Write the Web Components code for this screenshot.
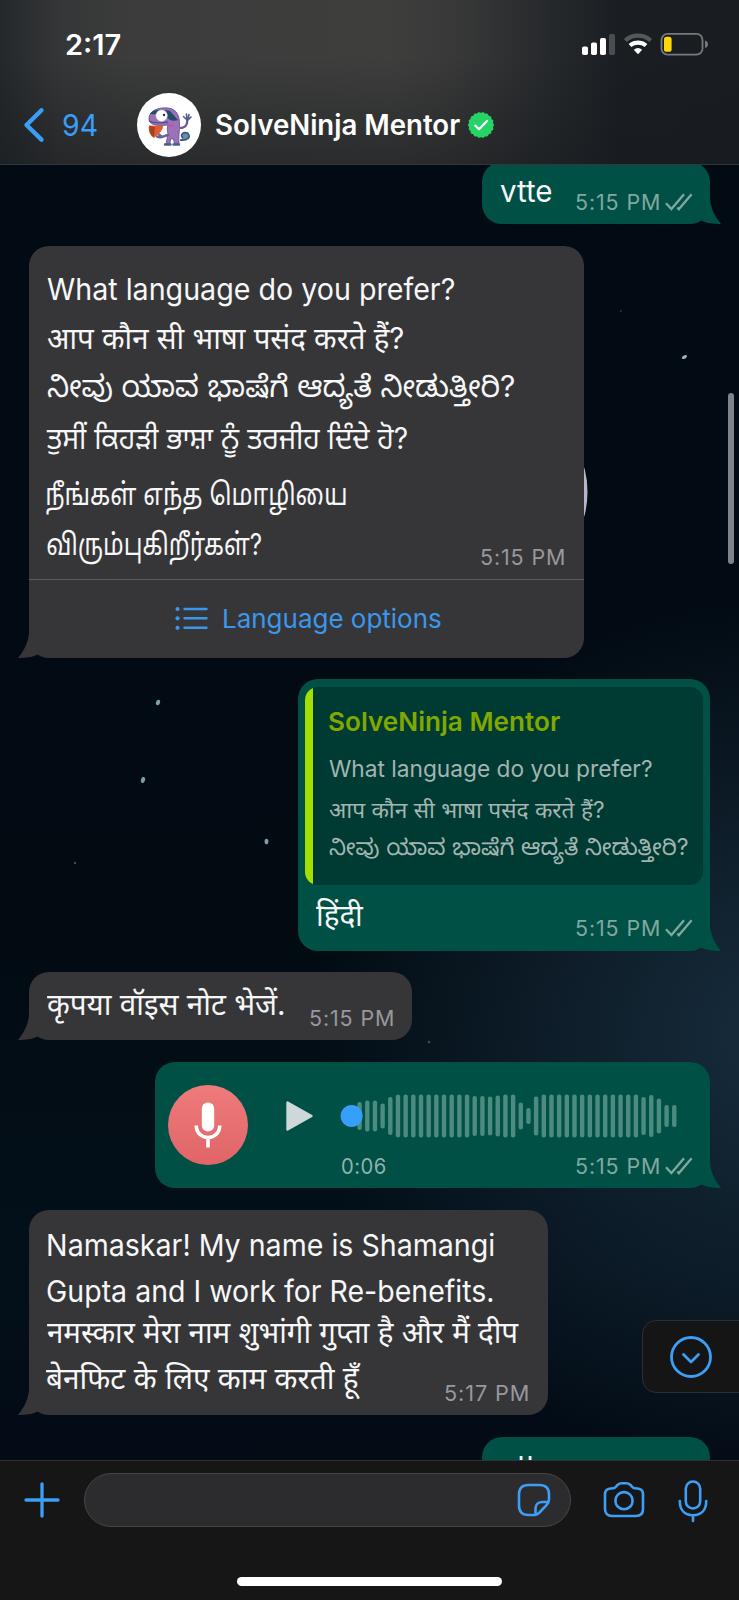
<!DOCTYPE html>
<html lang="en">
<head>
<meta charset="utf-8">
<title>SolveNinja Mentor</title>
<style>
html,body{margin:0;padding:0;background:#020a12}
body{width:739px;height:1600px;overflow:hidden;font-family:Inter,"Noto Sans",sans-serif}
</style>
</head>
<body>
<chat-screen></chat-screen>
<script>
const FONT = 'Inter,"Noto Sans","Noto Sans Devanagari","Noto Sans Kannada","Noto Sans Gurmukhi","Noto Sans Tamil",sans-serif';
const ctx = document.createElement('canvas').getContext('2d');
function define(name, html, setup) {
  const tpl = document.createElement('template');
  tpl.innerHTML = html;
  customElements.define(name, class extends HTMLElement {
    constructor() {
      super();
      this.attachShadow({mode: 'open'}).append(tpl.content.cloneNode(true));
    }
    connectedCallback() { if (setup) setup.call(this, this.shadowRoot); }
  });
}

// A single line of text whose visible glyphs span exactly `w` pixels.
define('fit-text', `<style>
:host{display:block;flex:none;white-space:pre;color:#f7f7f8;height:40px;line-height:40px}
span{display:inline-block;transform-origin:0 0;line-height:inherit}
</style><span><slot></slot></span>`, function (root) {
  const size = +(this.getAttribute('size') || 30), w = +this.getAttribute('w');
  const weight = this.getAttribute('weight') || 400, ls = this.getAttribute('ls') || 0;
  const lh = this.getAttribute('lh') || 40;
  const span = root.querySelector('span');
  Object.assign(this.style, {width: w + 'px', height: lh + 'px', lineHeight: lh + 'px'});
  Object.assign(span.style, {fontFamily: FONT, fontSize: size + 'px', fontWeight: weight, letterSpacing: ls + 'px'});
  ctx.font = weight + ' ' + size + 'px ' + FONT;
  ctx.letterSpacing = ls + 'px';
  const m = ctx.measureText(this.textContent);
  const k = w / (m.actualBoundingBoxRight + m.actualBoundingBoxLeft);
  span.style.transform = `translateX(${m.actualBoundingBoxLeft * k}px) scaleX(${k})`;
});

define('time-stamp', `<style>
:host{display:flex;flex:none;color:#98989d}
fit-text{color:inherit}
svg{display:none;margin:4px 0 0 6px}
:host([read]){color:#80a8a0}
:host([read]) svg{display:block}
</style><fit-text w="83" size="21.5" lh="26" ls="0.9"></fit-text>
<svg width="28" height="18" viewBox="0 0 28 18" fill="none" stroke="currentColor" stroke-width="2.3"><path d="M1 10.2 6.4 16 19 1.2M12.4 14.6 13.8 16.2 26.6 1.2"/></svg>`,
function (root) {
  const t = root.querySelector('fit-text'), n = document.createElement('fit-text');
  for (const a of t.attributes) n.setAttribute(a.name, a.value);
  n.textContent = this.getAttribute('t');
  t.replaceWith(n);
});

define('chat-bubble', `<style>
:host{display:block;position:relative;box-sizing:border-box;border-radius:20px;background:#363638;flex:none;margin-left:29px;align-self:flex-start}
:host([out]){background:#005045;align-self:flex-end;margin:0 29px 0 0}
svg{position:absolute;bottom:0;left:-11px;fill:#363638}
:host([out]) svg{left:auto;right:-11px;transform:scaleX(-1);fill:#005045}
</style><slot></slot>
<svg width="22" height="26" viewBox="0 0 22 26"><path d="M11 0C10.800 9 6.500 18 0 26 8 26 15 25.200 20 22.300L22 4V0Z"/></svg>`);

define('text-row', `<style>
:host{display:flex;justify-content:space-between;align-items:flex-start}
</style><slot></slot>`);

define('list-button', `<style>
:host{display:flex;height:77px;border-top:1px solid #5c5c5f;align-items:flex-start;box-sizing:border-box}
svg{margin:26px 16px 0 146px;flex:none}
fit-text{margin-top:19px;color:#3b97ec}
</style><svg width="33" height="24" viewBox="0 0 33 24" stroke="#3b97ec" stroke-width="2.4" stroke-linecap="round" fill="#3b97ec"><path d="M9.5 3H31.5M9.5 12.3H31.5M9.5 21.8H31.5"/><g stroke="none"><circle cx="2.5" cy="3" r="2.1"/><circle cx="2.5" cy="12.3" r="2.1"/><circle cx="2.5" cy="21.8" r="2.1"/></g></svg>
<fit-text w="217" size="26">Language options</fit-text>`);

define('quote-card', `<style>
:host{display:block;box-sizing:border-box;width:398px;height:198px;margin:0 7px;background:#003b33;border-radius:13px;overflow:hidden}
div{height:198px;box-sizing:border-box;border-left:8px solid #a3e000;padding:15px 0 0 16px}
fit-text{color:#a4b4b1}
fit-text:first-child{color:#82a800}
</style><div><fit-text w="231" size="26" weight="600">SolveNinja Mentor</fit-text>
<fit-text w="323" size="22.5" lh="30" style="margin-top:12px">What language do you prefer?</fit-text>
<fit-text w="275" size="22.5" lh="30" style="margin-top:11px">आप कौन सी भाषा पसंद करते हैं?</fit-text>
<fit-text w="359" size="22.5" lh="30" style="margin-top:7px">ನೀವು ಯಾವ ಭಾಷೆಗೆ ಆದ್ಯತೆ ನೀಡುತ್ತೀರಿ?</fit-text></div>`);

define('voice-note', `<style>
:host{display:flex;align-items:flex-start}
.disc{width:80px;height:80px;flex:none;border-radius:50%;background:linear-gradient(#ef7b7b,#e06568);margin:23px 0 0 13px;display:flex;align-items:center;justify-content:center}
.play{margin:38px 0 0 37px;flex:none}
.main{margin:0 0 0 25px;width:354px;flex:none}
.wave{display:block;margin-top:28px}
text-row{margin-top:11px}
</style>
<div class="disc"><svg width="28" height="46" viewBox="0 0 28 46" fill="none" stroke="#fff" stroke-width="3.6"><rect x="7.8" y="0.5" width="12.4" height="29" rx="6.2" fill="#fff" stroke="none"/><path d="M2.3 23.5C2.3 31 7.6 35.5 14 35.5S25.7 31 25.7 23.5" stroke-linecap="butt"/><path d="M14 35.5V45.5"/></svg></div>
<svg class="play" width="29" height="32" viewBox="0 0 29 32"><path d="M2.5 2.5V29.5L26.5 16Z" fill="#ced8da" stroke="#ced8da" stroke-width="2.4" stroke-linejoin="round"/></svg>
<div class="main"><svg class="wave" width="345" height="52" viewBox="339 1090 345 52"></svg>
<text-row><fit-text w="44" size="21.5" lh="26" ls="0.5" style="color:#8db3ac;margin-left:3px">0:06</fit-text><time-stamp t="5:15 PM" read></time-stamp></text-row></div>`,
function (root) {
  const h = [28,31,31,25,38,43,43,43,43,43,43,43,43,43,43,40,40,39,41,43,43,27,16,39,43,43,43,43,43,43,43,43,43,43,43,43,43,38,42,35,22,22];
  root.querySelector('.wave').innerHTML = h.map((v, i) =>
    `<rect x="${(357.4 + i * 7.675).toFixed(2)}" y="${1116 - v / 2}" width="4.4" height="${v}" rx="2.1" fill="#4d8a80"/>`).join('') +
    '<circle cx="351.6" cy="1116" r="11" fill="#359ffb"/>';
});

define('scroll-down', `<style>
:host{position:absolute;right:-2px;top:1155px;width:99px;height:73px;box-sizing:border-box;background:#151516;border:1px solid #2c2f32;border-radius:14px 0 0 14px;display:flex;align-items:center;padding-left:26px}
</style><svg width="44" height="44" viewBox="0 0 44 44" fill="none" stroke="#3c9ef5" stroke-width="2.8" stroke-linecap="round" stroke-linejoin="round"><circle cx="22" cy="22" r="19.5"/><path d="M14.5 19.5 22 27 29.5 19.5"/></svg>`);

define('status-bar', `<style>
:host{display:flex;align-items:flex-start;height:80px}
fit-text{margin:25px 0 0 66px;color:#fff}
svg{margin:32px 0 0 461px}
</style><fit-text w="54" size="28" weight="600">2:17</fit-text>
<svg width="128" height="26" viewBox="0 0 128 26"><g fill="#fff"><rect x="1" y="14.5" width="6" height="8.500" rx="1.7"/><rect x="10" y="10.5" width="6" height="12.5" rx="1.7"/><rect x="19" y="6" width="6" height="17" rx="1.7"/></g><rect x="28" y="2" width="6" height="21" rx="1.7" fill="#4b4d50"/>
<g fill="none" stroke-width="4.2"><path d="M44.3 8.5A19 19 0 0 1 69.7 8.5" stroke="#55585b"/><path d="M49 13.5A12.5 12.5 0 0 1 65 13.5" stroke="#fff"/></g><path d="M57 22.3 52.8 17.8A6.6 6.6 0 0 1 61.2 17.8Z" fill="#fff"/>
<rect x="80.5" y="1.9" width="41" height="20.7" rx="6" fill="none" stroke="#77797b" stroke-width="1.8"/><rect x="83" y="4.8" width="7.6" height="15" rx="2.6" fill="#ffd60a"/><path d="M124 8.5C128 9.5 128 15 124 16Z" fill="#77797b"/></svg>`);

define('verified-badge', `<style>:host{display:block;width:28px;height:28px}svg{display:block}</style>
<svg width="28" height="28" viewBox="0 0 28 28"><path class="b" fill="#25d366"/><path d="M8.2 14.5 12 18.3 20 10" fill="none" stroke="#fff" stroke-width="2.2" stroke-linecap="round" stroke-linejoin="round"/></svg>`,
function (root) {
  let d = '';
  for (let i = 0; i <= 180; i++) {
    const a = i * Math.PI / 90, r = 12.6 + .45 * Math.cos(18 * a);
    d += (i ? 'L' : 'M') + (14 + r * Math.cos(a)).toFixed(2) + ' ' + (14 + r * Math.sin(a)).toFixed(2);
  }
  root.querySelector('.b').setAttribute('d', d + 'Z');
});

define('mentor-avatar', `<style>:host{display:block;width:64px;height:64px}svg{display:block}</style>
<svg width="64" height="64" viewBox="0 0 64 64"><circle cx="32" cy="32" r="32" fill="#fff"/>
<path d="M43 47C51 48 54 44 51 40.500C47 38 42 42 46 45" fill="#6d8ba8" stroke="#35577b" stroke-width="1.600"/>
<path d="M43 35C49 35 51 31 50 26" fill="none" stroke="#6b5a96" stroke-width="2.200"/>
<path d="M50 27 46.500 23.500M50 27 49.500 21M51 26.500 52 21.500M51 27 54 24" stroke="#52608d" stroke-width="1.600" stroke-linecap="round"/>
<path d="M12 27C11 18 21 14 31 15C40 16 43 23 42.500 33C42.500 39 41.500 43 42 51L37.500 51 36.500 46 33.500 46 33 51 29 51 31 41C30 37 30 35 31 32C23 33 13 33 12 27Z" fill="#9b72b8" stroke="#5c4b86" stroke-width=".8"/>
<path d="M13 21C17 15 27 17 33 18L41 27C36 29 31 27 28 22Z" fill="#244b68"/>
<path d="M12 28C18 31 25 30 31 29" fill="none" stroke="#51538b" stroke-width="1.300"/>
<path d="M30 30C34 34 37 31 38.500 29.500L35 34 31 33Z" fill="#c84ba5"/>
<circle cx="24.600" cy="22.600" r="5.800" fill="#fff" stroke="#aab3c3" stroke-width=".6"/><circle cx="27" cy="22" r="1.200" fill="#202b46"/>
<path d="M12 32.500 26 33C26 38 21 41 17 45C13 43 11 38 12 32.500Z" fill="#e45c2b"/><path d="M12.500 33 18 34 17 44C13 42 12 37 12.500 33Z" fill="#9f4526"/>
<path d="M20 43.500C24 46 26 43 31 42M22 41.500 25 44" stroke="#68639a" stroke-width="2.400" fill="none" stroke-linecap="round"/>
<path d="M28 51.500H33.500M36.500 51.500H42" stroke="#436484" stroke-width="2.400" stroke-linecap="round"/></svg>`);

define('chat-header', `<style>
:host{display:block;height:165px;box-sizing:border-box;border-bottom:1px solid #34373a;position:relative;z-index:1;
background:linear-gradient(rgba(20,22,26,0) 35%,rgba(22,25,29,.5)),linear-gradient(90deg,#24282b 0,#353637 60px,#3b3c3b 130px,#3e3e3d 390px,#393939 450px,#26292c 550px,#1a1e22 620px,#191d22)}
.bar{display:flex;align-items:center;height:90px}
.back{margin:0 17px 0 22px}
</style><status-bar></status-bar>
<div class="bar"><svg class="back" width="24" height="36" viewBox="0 0 24 36" fill="none" stroke="#3a9ef8" stroke-width="4.400" stroke-linecap="round" stroke-linejoin="round"><path d="M19.500 3.300 4.500 18 19.500 32.600"/></svg>
<fit-text w="34" size="29.500" style="color:#3a9ef8">94</fit-text>
<mentor-avatar style="margin-left:40px"></mentor-avatar>
<fit-text w="244" size="28" weight="600" style="margin-left:15px;color:#fff">SolveNinja Mentor</fit-text>
<verified-badge style="margin-left:7px"></verified-badge></div>`);

define('night-sky', `<style>
:host{position:absolute;inset:0;background:radial-gradient(ellipse 480px 440px at 790px 870px,#182d3e 0,rgba(19,37,51,.8) 40%,rgba(10,24,36,0) 100%),linear-gradient(180deg,#020a14,#020b12 60%,#03101a 85%,#030b15)}
svg{display:block}
</style><svg width="739" height="1295" viewBox="0 165 739 1295"><g fill="#9fb3ba"><ellipse cx="684.500" cy="357" rx="2.800" ry="1.600" transform="rotate(-30 684.500 357)"/><g fill="#7f9fa6"><ellipse cx="158" cy="702.500" rx="2" ry="2.800" transform="rotate(20 158 702.500)"/><ellipse cx="143" cy="780" rx="2" ry="3" transform="rotate(15 143 780)"/><ellipse cx="266.500" cy="841.500" rx="1.900" ry="2.800"/></g><circle cx="75" cy="863" r="1.200" opacity=".4"/><circle cx="429" cy="1042" r="1.200" opacity=".4"/><circle cx="621" cy="311" r="1.200" opacity=".2"/></g><ellipse cx="553" cy="492" rx="34.500" ry="58" fill="#b8b5cc"/></svg>`);

define('message-list', `<style>
:host{display:flex;flex-direction:column;position:relative;height:1295px;overflow:hidden}
chat-bubble{z-index:1}
i{position:absolute;z-index:2;left:728px;top:228px;width:6px;height:171px;border-radius:3px;background:#7d8388}
</style><night-sky></night-sky>
<chat-bubble out style="width:228px;height:62px;margin-top:-3px"><text-row style="padding:9px 17px 0 18px"><fit-text w="52">vtte</fit-text><time-stamp t="5:15 PM" read style="margin-top:18px"></time-stamp></text-row></chat-bubble>
<chat-bubble style="width:555px;height:412px;margin-top:22px;padding-top:23px">
<fit-text w="407" style="margin-left:18px">What language do you prefer?</fit-text>
<fit-text w="356" style="margin:9px 0 0 18px">आप कौन सी भाषा पसंद करते हैं?</fit-text>
<fit-text w="467" style="margin:8px 0 0 18px">ನೀವು ಯಾವ ಭಾಷೆಗೆ ಆದ್ಯತೆ ನೀಡುತ್ತೀರಿ?</fit-text>
<fit-text w="361" style="margin:12px 0 0 17px">ਤੁਸੀਂ ਕਿਹੜੀ ਭਾਸ਼ਾ ਨੂੰ ਤਰਜੀਹ ਦਿੰਦੇ ਹੋ?</fit-text>
<fit-text w="300" style="margin:16px 0 0 17px">நீங்கள் எந்த மொழியை</fit-text>
<text-row style="margin:10px 20px 9px 18px"><fit-text w="214">விரும்புகிறீர்கள்?</fit-text><time-stamp t="5:15 PM" style="margin-top:20px"></time-stamp></text-row>
<list-button></list-button></chat-bubble>
<chat-bubble out style="width:412px;height:272px;margin-top:21px;padding-top:8px"><quote-card></quote-card>
<text-row style="margin:10px 17px 0 18px"><fit-text w="48">हिंदी</fit-text><time-stamp t="5:15 PM" read style="margin-top:20px"></time-stamp></text-row></chat-bubble>
<chat-bubble style="width:383px;height:68px;margin-top:21px"><text-row style="padding:12px 19px 0 18px"><fit-text w="237">कृपया वॉइस नोट भेजें.</fit-text><time-stamp t="5:15 PM" style="margin-top:21px"></time-stamp></text-row></chat-bubble>
<chat-bubble out style="width:555px;height:126px;margin-top:22px"><voice-note></voice-note></chat-bubble>
<chat-bubble style="width:519px;height:205px;margin-top:22px;padding-top:15px">
<fit-text w="446" style="margin-left:19px">Namaskar! My name is Shamangi</fit-text>
<fit-text w="446" style="margin:6px 0 0 18px">Gupta and I work for Re-benefits.</fit-text>
<fit-text w="472" style="margin:1px 0 0 18px">नमस्कार मेरा नाम शुभांगी गुप्ता है और मैं दीप</fit-text>
<text-row style="margin:6px 20px 0 17px"><fit-text w="315">बेनफिट के लिए काम करती हूँ</fit-text><time-stamp t="5:17 PM" style="margin-top:22px"></time-stamp></text-row></chat-bubble>
<chat-bubble out style="width:228px;height:62px;margin-top:22px"><text-row style="padding:9px 17px 0 18px"><fit-text w="52">vtte</fit-text></text-row></chat-bubble>
<i></i><scroll-down style="z-index:2"></scroll-down>`);

define('compose-bar', `<style>
:host{display:flex;flex-direction:column;align-items:center;height:140px;box-sizing:border-box;background:#161616;border-top:1px solid #2e3032;position:relative}
.row{display:flex;align-items:center;width:739px;height:78px}
.field{display:flex;align-items:center;justify-content:flex-end;box-sizing:border-box;width:487px;height:54px;border:1px solid #454547;border-radius:27px;background:#2c2c2e;margin:0 33px 0 24px;padding-right:19px}
.home{width:265px;height:9px;border-radius:5px;background:#fff;margin-top:38px}
svg{flex:none;fill:none;stroke:#3c9ef5;stroke-width:2.600;stroke-linecap:round;stroke-linejoin:round}
</style><div class="row"><svg width="36" height="36" viewBox="0 0 36 36" style="margin-left:24px;stroke-width:3.300"><path d="M18 2V34M2 18H34"/></svg>
<div class="field"><svg width="34" height="34" viewBox="0 0 34 34"><path d="M2 11.500C2 5 5 2 11.500 2H22.500C29 2 32 5 32 11.500V16.500C32 19 31 20.500 29.500 22.200L22 30C20.500 31.500 19 32 16.500 32H11.500C5 32 2 29 2 22.500ZM18.500 32V25.500C18.500 21.500 21.500 19 25.500 19H31.500"/></svg></div>
<svg width="42" height="38" viewBox="0 0 42 38" style="margin:0 33px 0 -1px"><path d="M2 13.500C2 9.500 4 7.800 7.500 7.500L10.500 7.200C12.500 7 13 5.500 14.500 4C15.800 2.700 17 2.300 19 2.300H23C25 2.300 26.200 2.700 27.500 4C29 5.500 29.500 7 31.500 7.200L34.500 7.500C38 7.800 40 9.500 40 13.500V28C40 32.500 37.500 35 33 35H9C4.500 35 2 32.500 2 28Z"/><circle cx="21" cy="19.700" r="8.600"/></svg>
<svg width="30" height="44" viewBox="0 0 30 44" style="margin-top:1px"><rect x="7.800" y="2.500" width="14.400" height="27" rx="7.200"/><path d="M1.800 22C1.800 31.500 7 36.200 15 36.200S28.200 31.500 28.200 22M15 36.500V42"/></svg></div>
<div class="home"></div>`);

define('chat-screen', `<style>:host{display:flex;flex-direction:column;width:739px;height:1600px}</style>
<chat-header></chat-header><message-list></message-list><compose-bar></compose-bar>`);
</script>
</body>
</html>
